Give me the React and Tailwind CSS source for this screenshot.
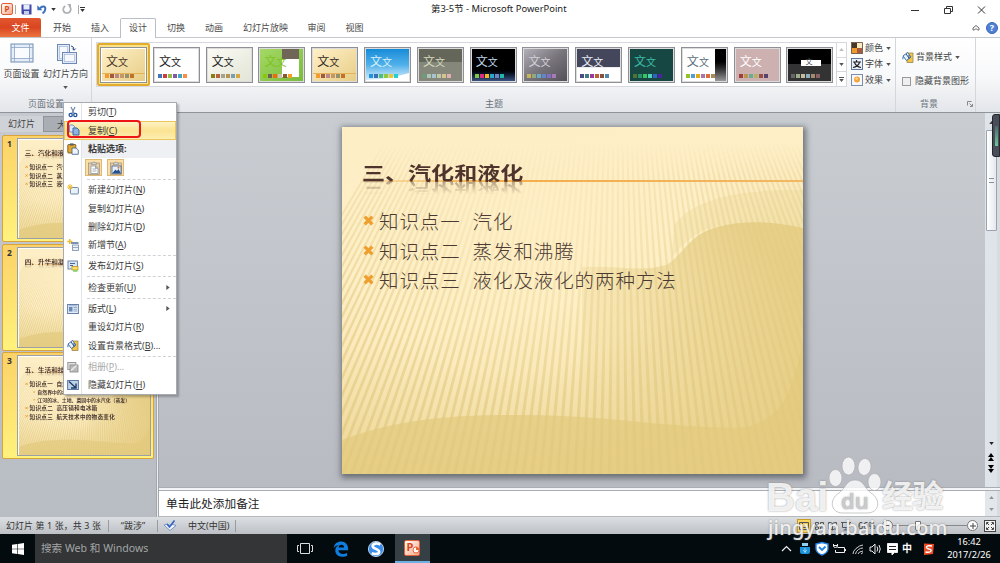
import React from "react";

const RAYS = Array.from({ length: 96 }, (_, i) => i - 50);

function SlideBackground({ id }) {
  return (
    <svg viewBox="0 0 461 347" preserveAspectRatio="none" className="absolute inset-0 h-full w-full">
      <defs>
        <linearGradient id={id + "base"} x1="0" y1="0" x2="0.25" y2="1">
          <stop offset="0" stopColor="#fdeec6" />
          <stop offset="0.6" stopColor="#feefc5" />
          <stop offset="1" stopColor="#f3e0a6" />
        </linearGradient>
        <radialGradient id={id + "glow"} gradientUnits="userSpaceOnUse" cx="170" cy="60" r="410">
          <stop offset="0.45" stopColor="#e3c97d" stopOpacity="0" />
          <stop offset="1" stopColor="#e3c97d" stopOpacity="0.7" />
        </radialGradient>
        <linearGradient id={id + "fade"} x1="0" y1="0" x2="0" y2="1">
          <stop offset="0.05" stopColor="#000" />
          <stop offset="0.14" stopColor="#888" />
          <stop offset="0.5" stopColor="#ddd" />
          <stop offset="1" stopColor="#fff" />
        </linearGradient>
        <linearGradient id={id + "top"} x1="0" y1="0" x2="0" y2="1">
          <stop offset="0.05" stopColor="#000" />
          <stop offset="0.4" stopColor="#fff" />
        </linearGradient>
        <radialGradient id={id + "mid"} gradientUnits="userSpaceOnUse" cx="190" cy="90" r="190">
          <stop offset="0" stopColor="#000" stopOpacity="0.85" />
          <stop offset="1" stopColor="#000" stopOpacity="0" />
        </radialGradient>
        <linearGradient id={id + "hill"} gradientUnits="userSpaceOnUse" x1="240" y1="300" x2="430" y2="130">
          <stop offset="0" stopColor="#e4cb80" stopOpacity="0" />
          <stop offset="0.45" stopColor="#e4cb80" stopOpacity="0.3" />
          <stop offset="1" stopColor="#e4cb80" stopOpacity="0.85" />
        </linearGradient>
        <mask id={id + "mask"}>
          <rect width="461" height="347" fill={`url(#${id}fade)`} />
          <rect width="461" height="347" fill={`url(#${id}mid)`} />
        </mask>
        <mask id={id + "topmask"}>
          <rect width="461" height="347" fill={`url(#${id}top)`} />
        </mask>
      </defs>
      <rect width="461" height="347" fill={`url(#${id}base)`} />
      <rect width="461" height="347" fill={`url(#${id}glow)`} mask={`url(#${id}topmask)`} />
      <g mask={`url(#${id}mask)`}>
        {RAYS.map((n) => (
          <polygon
            key={n}
            fill="#dfc57b"
            fillOpacity="0.58"
            points={`276,-377 ${276 + n * 8.6 - 1.7},347 ${276 + n * 8.6 + 1.7},347`}
          />
        ))}
      </g>
      <path d="M332 98C352 72 395 62 461 63V104C425 92 395 94 365 102C350 108 340 118 330 130Z" fill="#e9d38f" fillOpacity="0.3" />
      <path d="M240 140C270 138 305 146 326 137C340 128 348 108 372 101C400 93 430 94 461 101V347H240Z" fill={`url(#${id}hill)`} />
      <path d="M0 313C60 290 120 288 180 288C260 288 330 301 395 301C440 298 450 265 461 215V347H0Z" fill="#e2c97c" fillOpacity="0.68" />
    </svg>
  );
}

function Slide({ id, title, lines, bold }) {
  return (
    <div className="relative h-[347px] w-[461px] overflow-hidden bg-[#feefc6] font-['Noto_Sans_CJK_SC',sans-serif] text-[#4b3a33]">
      <SlideBackground id={id} />
      <div className="relative flex flex-col">
        <div className="absolute top-[53px] right-0 left-[20px] h-[2px] bg-linear-to-r from-[#f6b95a]/20 via-[#f4ad49] via-30% to-[#f3b763]" />
        <div className="mt-[32px] ml-[20px] h-[28px]">
          <div className="w-fit origin-left scale-x-[1.28] text-[18px] leading-[26px] font-bold whitespace-nowrap text-[#4e342c] [-webkit-box-reflect:below_-9px_linear-gradient(transparent_30%,rgba(0,0,0,0.6))]">
            {title}
          </div>
        </div>
        <div className="mt-[19px] flex flex-col">
          {lines.map(([head, tail, sub], i) => (
            <div key={i} className={sub ? "flex h-[27px] items-center pl-[49px]" : "flex h-[29.5px] items-center pl-[21px]"}>
              <svg viewBox="0 0 10 10" className={sub ? "h-[8px] w-[8px]" : "h-[11px] w-[11px]"}>
                <path d="M1.5 1.5L8.5 8.5M8.5 1.5L1.5 8.5" stroke="#ef9f2e" strokeWidth="3" />
              </svg>
              <div
                className={
                  (sub ? "ml-[7px] text-[17px] " : "ml-[5px] text-[19.5px] tracking-[0.9px] ") +
                  (bold ? "font-bold" : "font-light") +
                  " flex gap-[12px] leading-[29px] whitespace-nowrap"
                }
              >
                <span>{head}</span>
                {tail && <span>{tail}</span>}
              </div>
            </div>
          ))}
        </div>
      </div>
    </div>
  );
}

const SLIDES = [
  {
    title: "三、汽化和液化",
    lines: [
      ["知识点一", "汽化"],
      ["知识点二", "蒸发和沸腾"],
      ["知识点三", "液化及液化的两种方法"],
    ],
  },
  { title: "四、升华和凝华", lines: [] },
  {
    title: "五、生活和技术",
    lines: [
      ["知识点一", "自然界"],
      ["自然界中的水循环", "", true],
      ["江河的冰、土地、菜园中的水汽化（蒸发）", "", true],
      ["知识点二", "高压锅和电冰箱"],
      ["知识点三", "航天技术中的物态变化"],
    ],
  },
];

function Thumb({ n, slide }) {
  return (
    <div className="flex h-[107px] w-[152px] rounded-[2px] border border-[#d9a53a] bg-linear-to-b from-[#fbd268] to-[#fff27c] pt-[2px]">
      <div className="w-[14px] pt-[1px] pl-[4px] text-[8.5px] leading-[10px] font-bold text-[#333]">{n}</div>
      <div className="h-[101px] w-[134px] overflow-hidden border border-[#9b9fa8] bg-white p-px">
        <div className="origin-top-left scale-[0.287]">
          <Slide id={"t" + n} title={slide.title} lines={slide.lines} bold />
        </div>
      </div>
    </div>
  );
}

const THEMES = [
  { bg: "bg-linear-to-br from-[#fff0c8] to-[#e7cd85]", fg: "text-[#493728]", sw: ["#f29a2c", "#a5583f", "#b98a83", "#c39766", "#97906d", "#c07326"], line: true },
  { bg: "bg-white", fg: "text-[#222]", sw: ["#4475b4", "#c8403e", "#91bb4b", "#7f5aa5", "#3fa8c5", "#f79040"], light: true },
  { bg: "bg-linear-to-br from-[#fbfbf4] to-[#e3e5d7]", fg: "text-[#222]", sw: ["#8c7b16", "#b8613f", "#a5a38c", "#b59353", "#789eaf", "#d6a740"] },
  { bg: "bg-linear-to-br from-[#a5d865] to-[#79bc3c]", fg: "text-[#7fc323]", sw: ["#8bc80c", "#6b6453", "#f6670c", "#c9c3ac", "#86592e", "#f1a021"], deco: "green" },
  { bg: "bg-linear-to-br from-[#fff0c8] to-[#e7cd85]", fg: "text-[#332b25]", sw: ["#f29a2c", "#a5583f", "#b98a83", "#c39766", "#97906d", "#c07326"], line: true },
  { bg: "bg-linear-to-b from-[#128bd8] via-[#4fb1ea] to-[#dff2fb]", fg: "text-[#d9f1fb]", sw: ["#2192dd", "#3d6fb7", "#54bd74", "#8fc93e", "#ebc637", "#23cfd0"], deco: "wave" },
  { bg: "bg-linear-to-b from-[#64665a] from-40% to-[#84877a] to-42%", fg: "text-[#d6d8bd]", sw: ["#6f9b78", "#a8c7b9", "#a7c5cf", "#c3c9a4", "#d5c493", "#e3aeae"] },
  { bg: "bg-linear-to-b from-black from-60% to-[#3a5485]", fg: "text-[#bfd9ea]", sw: ["#7bc843", "#dd2b87", "#f5b420", "#24a9cd", "#6d83c4", "#1fb8a8"] },
  { bg: "bg-linear-to-br from-[#b2afb8] via-[#77747b] to-[#565158]", fg: "text-[#d3d1d9]", sw: ["#c9b559", "#94a880", "#67abc9", "#6784c7", "#816fc7", "#a57bb8"] },
  { bg: "bg-linear-to-b from-[#44465b] from-56% to-white to-58%", fg: "text-[#e9edf5]", sw: ["#4f4a87", "#3e7e83", "#99399d", "#bc6132", "#83513c", "#5086aa"] },
  { bg: "bg-[#174743]", fg: "text-[#3cbfa9]", sw: ["#4f7332", "#2f8e6b", "#33c85e", "#50d1ba", "#2b66c2", "#4b22a2"] },
  { bg: "bg-white", fg: "text-[#5b6e7d]", sw: ["#91c328", "#4f9fd0", "#dfac13", "#ae72ad", "#dc6e36", "#a98b5b"], deco: "dark" },
  { bg: "bg-[#cdb0b0]", fg: "text-white", sw: ["#a23d3d", "#b8964f", "#6eaa91", "#b6b06f", "#984e40", "#56426d"] },
  { bg: "bg-linear-to-b from-black from-45% to-[#333] to-47%", fg: "text-[#555]", sw: ["#666", "#9dad8f", "#c5bba1", "#8baec0", "#a6896f", "#8b6165"], deco: "label" },
];

function ThemeTile({ t, first }) {
  return (
    <div className={first ? "flex h-[43px] w-[53px] shrink-0 items-center justify-center rounded-[2px] border-2 border-[#e4ac2e] bg-[#fbe387]" : "flex h-[43px] w-[52.8px] shrink-0 items-center justify-center"}>
      <div className={`relative h-[36px] w-[47px] overflow-hidden border border-[#8d9094] p-px ${first ? "bg-white" : "bg-[#dcdcdc]"}`}>
        <div className={`relative flex h-full w-full flex-col overflow-hidden ${t.bg}`}>
          {t.deco === "green" && (
            <div className="absolute top-0 right-[4px] flex h-[28px] w-[17px] flex-col">
              <div className="h-[10px] bg-[#6f6657]" />
              <div className="flex-1 bg-white" />
            </div>
          )}
          {t.deco === "dark" && <div className="absolute inset-y-0 right-0 w-[11px] bg-linear-to-b from-black from-30% to-[#999]" />}
          {t.deco === "wave" && (
            <svg viewBox="0 0 43 32" preserveAspectRatio="none" className="absolute inset-0 h-full w-full">
              <path d="M0 31Q24 30 43 24V32H0Z" fill="#fff" />
            </svg>
          )}
          {t.line && <div className="absolute right-0 bottom-[7px] left-0 h-px bg-[#e5b25c]" />}
          {t.deco === "label" && <div className="absolute top-[11px] left-[13px] h-[6px] w-[20px] bg-white" />}
          <div className={`relative flex items-end pl-[4px] pt-[6px] text-[12px] leading-[14px] ${t.fg}`}>
            {t.deco === "label" ? (
              <span className="pl-[13px] text-[7px]">文</span>
            ) : (
              <>
                <span>文</span>
                <span className="text-[10px]">文</span>
              </>
            )}
          </div>
          <div className="relative mt-[5px] flex gap-px pl-[3px]">
            {t.sw.map((c, i) => (
              <i key={i} className="h-[4px] w-[4px]" style={{ background: c }} />
            ))}
          </div>
        </div>
      </div>
    </div>
  );
}

const Caret = ({ className = "" }) => (
  <svg viewBox="0 0 6 4" className={`h-[3px] w-[5px] ${className}`}>
    <path d="M0 0H6L3 4Z" fill="currentColor" />
  </svg>
);

const PptLogo = ({ className }) => (
  <div className={`flex items-center justify-center rounded-[2px] border border-[#e0603a] bg-linear-to-br from-white to-[#f5a684] font-bold text-[#d8491c] ${className}`}>P</div>
);

function BucketIcon({ className }) {
  return (
    <svg viewBox="0 0 12 12" className={className}>
      <rect x="5" y="2" width="6" height="9.5" fill="#f4c542" stroke="#8a7a52" strokeWidth=".7" />
      <path d="M1 5L5.5 1.5L9 6L4.5 9.5Z" fill="#e8f1fb" stroke="#365f96" strokeWidth=".9" />
      <path d="M4 3L7 7M7 4V8" stroke="#24508f" strokeWidth="1" fill="none" />
      <path d="M1 5Q-.2 7.5 .8 8.6Q1.8 8 1.4 5.5Z" fill="#3f74ba" />
    </svg>
  );
}

function MenuIcon({ kind }) {
  const common = { viewBox: "0 0 12 12", className: "h-[12px] w-[12px]" };
  switch (kind) {
    case "cut":
      return (
        <svg {...common}>
          <path d="M4 1L7.2 7.5M8 1L4.8 7.5" stroke="#6d88ae" strokeWidth="1.2" />
          <circle cx="3.7" cy="9" r="1.6" fill="none" stroke="#20539e" strokeWidth="1.3" />
          <circle cx="8.3" cy="9" r="1.6" fill="none" stroke="#20539e" strokeWidth="1.3" />
        </svg>
      );
    case "copy":
      return (
        <svg {...common}>
          <path d="M1.5 1H5L7 3V8H1.5Z" fill="#dbe8f8" stroke="#5d80b0" strokeWidth=".8" />
          <path d="M5 4H9L11 6V11H5Z" fill="#8db3e2" stroke="#315f9d" strokeWidth=".9" />
        </svg>
      );
    case "paste":
      return (
        <svg {...common}>
          <rect x=".8" y="1.5" width="8" height="8.5" rx=".7" fill="#e2a82e" stroke="#775a26" strokeWidth=".9" />
          <rect x="3" y=".4" width="3.6" height="2.2" fill="#59616b" />
          <path d="M5 5H9L11.3 7V11.3H5Z" fill="#eef4fb" stroke="#41618c" strokeWidth=".8" />
        </svg>
      );
    case "new":
      return (
        <svg {...common}>
          <rect x="3.4" y="3.5" width="8" height="6.5" rx=".8" fill="#e8f0fa" stroke="#7089ad" />
          <path d="M3 0V6M0 3H6M1 1L5 5M5 1L1 5" stroke="#f0bd31" strokeWidth="1" />
        </svg>
      );
    case "section":
      return (
        <svg {...common}>
          <path d="M2.8 0V5M.2 2.6H5.4" stroke="#f0bd31" strokeWidth="1.5" />
          <rect x="4" y="3" width="7.5" height="2" fill="#7b91b2" />
          <rect x="5.5" y="6" width="6" height="5.4" fill="#edf2f8" stroke="#8296b2" strokeWidth=".9" />
          <path d="M6 8.5H11" stroke="#8296b2" strokeWidth=".8" />
        </svg>
      );
    case "publish":
      return (
        <svg {...common}>
          <rect x="1" y="1" width="9.5" height="8" fill="#dce6f2" stroke="#6580a6" strokeWidth=".9" />
          <path d="M3 3.5H8M3 5.5H6" stroke="#44699a" />
          <rect x="5" y="6.5" width="6" height="3.5" fill="#ffe15c" stroke="#b48c24" strokeWidth=".7" />
          <path d="M6 11H10.5" stroke="#66c64e" strokeWidth="1.3" />
        </svg>
      );
    case "layout":
      return (
        <svg {...common}>
          <rect x=".6" y="1.5" width="10.8" height="9" fill="#e4edf8" stroke="#657fa8" />
          <rect x="2" y="4" width="3.5" height="4.5" fill="#6588b8" />
          <path d="M6.5 4.5H10M6.5 6.3H10M6.5 8H10M2 2.8H10" stroke="#7d97bd" strokeWidth=".8" />
        </svg>
      );
    case "bucket":
      return <BucketIcon className="h-[12px] w-[12px]" />;
    case "album":
      return (
        <svg {...common}>
          <rect x=".8" y="1.5" width="8" height="7" fill="#ddd" stroke="#999" />
          <rect x="3" y="4" width="8" height="7" fill="#bbb" stroke="#888" strokeWidth=".8" />
          <path d="M4 9.5L9.5 4.5" stroke="#eee" strokeWidth="1.2" />
        </svg>
      );
    case "hide":
      return (
        <svg {...common}>
          <rect x=".6" y="1.5" width="10.8" height="9" fill="#bed2e8" stroke="#5d7ba2" />
          <path d="M2 2.5L9 9M9 4.5V9H4" stroke="#1e3c67" strokeWidth="1.4" fill="none" />
        </svg>
      );
    default:
      return null;
  }
}

const MENU = [
  { icon: "cut", text: "剪切", key: "T" },
  { icon: "copy", text: "复制", key: "C", hot: true },
  { icon: "paste", text: "粘贴选项:", header: true },
  { paste: true },
  { sep: true },
  { icon: "new", text: "新建幻灯片", key: "N" },
  { text: "复制幻灯片", key: "A" },
  { text: "删除幻灯片", key: "D" },
  { icon: "section", text: "新增节", key: "A" },
  { sep: true },
  { icon: "publish", text: "发布幻灯片", key: "S" },
  { sep: true },
  { text: "检查更新", key: "U", more: true },
  { sep: true },
  { icon: "layout", text: "版式", key: "L", more: true },
  { text: "重设幻灯片", key: "R" },
  { icon: "bucket", text: "设置背景格式", key: "B", tail: "..." },
  { sep: true },
  { icon: "album", text: "相册", key: "P", tail: "...", off: true },
  { icon: "hide", text: "隐藏幻灯片", key: "H" },
];

function ContextMenu() {
  return (
    <div className="absolute top-[102px] left-[63px] flex h-[293px] w-[114px] flex-col border border-[#a7abb0] bg-white text-[9px] text-[#3b3b3b] shadow-[2px_2px_2px_rgba(0,0,0,0.25)]">
      {MENU.map((m, i) => {
        if (m.sep)
          return (
            <div key={i} className="flex h-[3px] shrink-0 items-center">
              <div className="h-full w-[18px] border-r border-[#e2e4e7]" />
              <div className="ml-[5px] flex-1 border-t border-dashed border-[#cfd2d6]" />
            </div>
          );
        if (m.paste)
          return (
            <div key={i} className="flex h-[20px] shrink-0 items-center">
              <div className="h-full w-[18px] border-r border-[#e2e4e7]" />
              <div className="ml-[3px] flex gap-[5px]">
                {[0, 1].map((k) => (
                  <div key={k} className="flex h-[17px] w-[17px] items-center justify-center border border-[#e0b876] bg-[#fbdfa9]">
                    <svg viewBox="0 0 14 14" className="h-[14px] w-[14px]">
                      <rect x="1.5" y="2" width="11" height="11.5" fill="#e7cfa2" stroke="#a39783" strokeWidth=".8" />
                      <path d="M4.5 3.5V2H6L7 .7L8 2H9.5V3.5Z" fill="#ddd" stroke="#888" strokeWidth=".6" />
                      {k === 0 ? (
                        <path d="M4 5H8.5L11 7.3V12.5H4Z M8.5 5V7.3H11 M5.5 8H9 M5.5 10H9.5" fill="#fff" stroke="#8190a5" strokeWidth=".7" />
                      ) : (
                        <>
                          <rect x="3" y="5" width="9" height="7.5" fill="#e8f0fa" stroke="#40608f" strokeWidth=".8" />
                          <path d="M3.5 12L6.5 8.5L8 10L9.5 8L11.7 12Z" fill="#244f8b" />
                          <circle cx="9.5" cy="6.8" r="1" fill="#e2762b" />
                        </>
                      )}
                    </svg>
                  </div>
                ))}
              </div>
            </div>
          );
        return (
          <div
            key={i}
            className={
              "flex h-[18.3px] shrink-0 items-center " +
              (m.hot ? "border border-[#ecc65a] bg-linear-to-b from-[#fdf2c3] via-[#fbe391] to-[#fdeeb0]" : "")
            }
          >
            <div className={"flex h-full w-[18px] items-center justify-center " + (m.hot ? "" : "border-r border-[#e2e4e7]")}>
              <MenuIcon kind={m.icon} />
            </div>
            <div
              className={
                "flex h-full flex-1 items-center whitespace-nowrap " +
                (m.header ? "bg-[#eef0f3] pl-[6px] font-bold" : m.hot ? "pl-[5px]" : "pl-[6px]") +
                (m.off ? " text-[#a9a9a9]" : "")
              }
            >
              <span>
                {m.text}
                {m.key && (
                  <>
                    (<u>{m.key}</u>){m.tail}
                  </>
                )}
              </span>
            </div>
            {m.more && (
              <svg viewBox="0 0 4 6" className="mr-[6px] h-[5px] w-[4px]">
                <path d="M0 0L4 3L0 6Z" fill="#555" />
              </svg>
            )}
          </div>
        );
      })}
    </div>
  );
}

function TitleBar() {
  return (
    <div className="flex h-[18px] shrink-0 items-center">
      <div className="flex w-[160px] items-center">
        <PptLogo className="ml-px h-[12px] w-[12px] text-[8px]" />
        <div className="ml-[2px] h-[9px] w-px bg-[#aaa]" />
        <svg viewBox="0 0 11 11" className="ml-[5px] h-[11px] w-[11px]">
          <path d="M.5 .5H10.5V10.5H1.5L.5 9.5Z" fill="#3f49a8" />
          <rect x="2.5" y=".5" width="6" height="5" fill="#e6ecfa" />
          <rect x="3" y="7" width="5" height="3.5" fill="#c9cde6" />
        </svg>
        <svg viewBox="0 0 10 10" className="ml-[5px] h-[10px] w-[10px]">
          <path d="M3 4.5C5 1.5 8.5 2 8.3 5C8.2 7 7 8.5 5.5 9.3" stroke="#3d6fc0" strokeWidth="2" fill="none" />
          <path d="M.3 1.2V6.3H5.4Z" fill="#3d6fc0" />
        </svg>
        <Caret className="ml-[4px] text-[#333]" />
        <svg viewBox="0 0 10 10" className="ml-[6px] h-[10px] w-[10px]">
          <path d="M3.2 2C-.2 4.5 1.2 9 5 9C9 9 10 4 7 2" stroke="#aeb2b7" strokeWidth="1.7" fill="none" />
          <path d="M5 0H9V4Z" fill="#aeb2b7" />
        </svg>
        <div className="ml-[6px] h-[9px] w-px bg-[#aaa]" />
        <div className="ml-px flex flex-col items-center gap-px text-[#333]">
          <div className="h-px w-[5px] bg-[#333]" />
          <Caret />
        </div>
      </div>
      <div className="flex-1 pl-[271px] text-[9.4px] tracking-[0.02px] whitespace-nowrap text-[#222]">第3-5节 - Microsoft PowerPoint</div>
      <svg viewBox="0 0 80 12" className="mr-[12px] h-[12px] w-[80px] translate-y-[1px]" fill="none" stroke="#333">
        <path d="M3 6.5H11M70 2.5L77 9.5M77 2.5L70 9.5" />
        <path d="M36.5 4.5H42.5V9.5H36.5ZM38.5 4V2.5H44.5V7.5H43" />
      </svg>
    </div>
  );
}

function RibbonTabs() {
  return (
    <div className="flex h-[20px] shrink-0 items-stretch border-b border-[#c4c8cd] text-[9px] leading-[19px] whitespace-nowrap text-[#4a4a4a]">
      <div className="w-[41px] rounded-tr-[2px] bg-linear-to-b from-[#e2572f] via-[#d94520] to-[#ec7340] text-center text-white">文件</div>
      <div className="ml-[12px] w-[19px]">开始</div>
      <div className="ml-[19px] w-[19px]">插入</div>
      <div className="ml-[10px] h-[20px] w-[36px] rounded-t-[2px] border border-b-0 border-[#b9bfc7] bg-white text-center leading-[18px]">设计</div>
      <div className="ml-[11px] w-[38px]">切换</div>
      <div className="w-[38px]">动画</div>
      <div className="w-[64.5px]">幻灯片放映</div>
      <div className="w-[38px]">审阅</div>
      <div className="flex-1">视图</div>
      <div className="flex items-center gap-[6px] pr-[2px]">
        <svg viewBox="0 0 8 8" className="h-[8px] w-[8px]" fill="none" stroke="#666">
          <path d="M1 4L4 1.5L7 4V6H5.5L4 4.5L2.5 6H1Z" />
        </svg>
        <div className="flex h-[12px] w-[12px] items-center justify-center rounded-full border border-[#3b66ba] bg-[#4f80d6] text-[9px] leading-[10px] font-bold text-white">?</div>
      </div>
    </div>
  );
}

function Ribbon() {
  return (
    <div className="flex h-[75px] shrink-0 border-b border-[#8f949b] bg-linear-to-b from-white via-[#f8f9fa] to-[#e3e6ea] text-[9px] leading-[12px] whitespace-nowrap text-[#444]">
      <div className="flex w-[92px] flex-col border-r border-[#d3d6da]">
        <div className="flex h-[60px] pt-[5px]">
          <div className="flex w-[43px] flex-col items-center">
            <svg viewBox="0 0 24 20" className="h-[20px] w-[24px]">
              <rect x="1" y="1" width="22" height="18" fill="#e4edf8" stroke="#738db4" />
              <path d="M4.5 1V19M19.5 1V19M1 4.5H23M1 15.5H23" stroke="#8ea5c7" strokeWidth=".8" />
              <rect x="5" y="5" width="14" height="10" fill="#f9fbfe" />
            </svg>
            <div className="mt-[5px]">页面设置</div>
          </div>
          <div className="flex w-[45px] flex-col items-center">
            <svg viewBox="0 0 24 22" className="h-[22px] w-[24px]">
              <rect x="3.5" y="1.5" width="12" height="16" fill="#e1eaf6" stroke="#6e89b2" />
              <rect x="5.5" y="3.5" width="8" height="12" fill="#f5f8fc" stroke="#a6b8d2" strokeWidth=".7" />
              <rect x="8.5" y="9.5" width="14" height="11" fill="#e1eaf6" stroke="#6e89b2" />
              <rect x="10.5" y="11.5" width="10" height="7" fill="#f5f8fc" stroke="#a6b8d2" strokeWidth=".7" />
              <path d="M17 3Q20 3 20 7M18.3 5.5L20 7.3L21.7 5.5" fill="none" stroke="#2e4c78" />
            </svg>
            <div className="mt-[3px]">幻灯片方向</div>
            <Caret className="mt-[6px] text-[#555]" />
          </div>
        </div>
        <div className="pl-[28px] text-[#6b727b]">页面设置</div>
      </div>
      <div className="flex w-[758px] flex-col pt-[4px] pl-[4px]">
        <div className="flex h-[45px] w-[751px] border border-[#d5d8dc] bg-white">
          <div className="flex flex-1 overflow-hidden">
            {THEMES.map((t, i) => (
              <ThemeTile key={i} t={t} first={i === 0} />
            ))}
          </div>
          <div className="flex w-[10px] flex-col border-l border-[#d5d8dc] text-[#555]">
            <div className="flex flex-1 items-center justify-center text-[#bbb]">
              <Caret className="rotate-180" />
            </div>
            <div className="flex flex-1 items-center justify-center border-y border-[#d5d8dc]">
              <Caret />
            </div>
            <div className="flex flex-1 flex-col items-center justify-center gap-px">
              <div className="h-px w-[5px] bg-[#555]" />
              <Caret />
            </div>
          </div>
        </div>
        <div className="mt-[11px] pl-[42px] text-center text-[#6b727b]">主题</div>
      </div>
      <div className="flex w-[46px] flex-col gap-[4px] border-r border-[#d3d6da] pt-[4px] pl-[1px]">
        {["颜色", "字体", "效果"].map((t, i) => (
          <div key={t} className="flex h-[12px] items-center">
            <svg viewBox="0 0 12 12" className="h-[12px] w-[12px]">
              {i === 0 && (
                <>
                  <path d="M0 0H6V6H0Z" fill="#4b3728" />
                  <path d="M6 0H12V6H6Z" fill="#fdebc0" />
                  <path d="M0 6H6V12H0Z" fill="#f09b27" />
                  <path d="M6 6H12V12H6Z" fill="#a55a41" />
                  <path d="M.5 .5H11.5V11.5H.5Z" fill="none" stroke="#776655" />
                </>
              )}
              {i === 1 && (
                <>
                  <rect x=".5" y=".5" width="11" height="11" fill="#e9f0f8" stroke="#5e7699" />
                  <path d="M2 4H10M5.5 2V4M3.5 4.5Q5 8.5 10 9.5M8.5 4.5Q7 8.5 2 9.5" stroke="#222" strokeWidth="1.2" fill="none" />
                </>
              )}
              {i === 2 && (
                <>
                  <rect x=".5" y=".5" width="11" height="11" fill="#f4f7fb" stroke="#7b8ea9" />
                  <circle cx="6" cy="5.5" r="3" fill="#f5a43a" />
                  <circle cx="5.5" cy="4.8" r="1.2" fill="#fcd590" />
                </>
              )}
            </svg>
            <span className="ml-[2px]">{t}</span>
            <Caret className="ml-[3px] text-[#555]" />
          </div>
        ))}
      </div>
      <div className="flex w-[80px] flex-col border-r border-[#d3d6da]">
        <div className="mt-[13px] ml-[6px] flex h-[12px] items-center">
          <BucketIcon className="h-[12px] w-[12px]" />
          <span className="ml-[2px]">背景样式</span>
          <Caret className="ml-[3px] text-[#555]" />
        </div>
        <div className="mt-[12px] ml-[6px] flex h-[12px] items-center">
          <div className="h-[9px] w-[9px] border border-[#999] bg-[#eee]" />
          <span className="ml-[4px]">隐藏背景图形</span>
        </div>
        <div className="mt-[11px] flex items-center pl-[24px] text-[#6b727b]">
          背景
          <svg viewBox="0 0 6 6" className="ml-[29px] h-[6px] w-[6px]" fill="none" stroke="#888">
            <path d="M.5 4.5V.5H4.5M2.5 2.5L5 5M5.5 3V5.5H3" />
          </svg>
        </div>
      </div>
    </div>
  );
}

function Workspace() {
  return (
    <div className="flex min-h-0 flex-1 bg-[#bbbfc6]">
      <div className="flex w-[156px] flex-col bg-linear-to-b from-[#c6cad0] to-[#b8bcc3]">
        <div className="mt-[3px] flex h-[16px] text-[9px] leading-[15px] text-[#444]">
          <div className="w-[43px] bg-[#cfd2d7] pl-[8px]">幻灯片</div>
          <div className="flex-1 border border-[#8f949c] bg-[#a9adb4] pl-[13px]">大纲</div>
        </div>
        <div className="mt-[3px] ml-[2px] flex flex-col gap-[1.5px]">
          {SLIDES.map((s, i) => (
            <Thumb key={i} n={i + 1} slide={s} />
          ))}
        </div>
      </div>
      <div className="w-[3px] border-x border-[#a4a8ae] bg-[#eceef0]" />
      <div className="flex flex-1 flex-col">
        <div className="flex h-[374px]">
          <div className="flex-1 bg-linear-to-b from-[#c9cdd2] to-[#b8bbc1] pt-[14px] pl-[183px]">
            <div className="h-[347px] w-[461px] shadow-[1px_2px_6px_2px_rgba(70,75,82,0.7)]">
              <Slide id="main" {...SLIDES[0]} />
            </div>
          </div>
          <div className="flex w-[12px] flex-col items-center bg-[#dfe3ea] text-[#444]">
            <Caret className="mt-[8px] rotate-180" />
            <div className="mt-[6px] flex h-[101px] w-[11px] items-center justify-center rounded-[1px] border border-[#9ba3b0] bg-linear-to-r from-white to-[#e4e7ed]">
              <div className="h-[5px] w-[5px] border-y border-[#8a8f98]" />
            </div>
            <Caret className="mt-[211px] text-[#222]" />
            <div className="mt-[8px] flex flex-col text-black">
              <Caret className="h-[4px] w-[6px] rotate-180" />
              <Caret className="h-[4px] w-[6px] rotate-180" />
            </div>
            <div className="mt-[4px] flex flex-col text-black">
              <Caret className="h-[4px] w-[6px]" />
              <Caret className="h-[4px] w-[6px]" />
            </div>
          </div>
          <div className="w-[3px] bg-[#d8dbe0]" />
        </div>
        <div className="h-[4px] border-y border-[#aaadb3] bg-[#f3f4f6]" />
        <div className="flex flex-1 border-b border-[#b5b8bd] bg-white">
          <div className="flex-1 pl-[7px] text-[11.7px] leading-[24px] text-[#222]">单击此处添加备注</div>
          <div className="flex w-[12px] flex-col items-center justify-between bg-[#e3e6eb] py-[5px] text-[#8c9496]">
            <Caret className="rotate-180" />
            <Caret />
          </div>
          <div className="w-[3px] bg-[#d8dbe0]" />
        </div>
      </div>
    </div>
  );
}

const Divider = () => <div className="h-[12px] w-px bg-[#989ca2]" />;

function StatusBar() {
  return (
    <div className="flex h-[17px] shrink-0 items-center bg-linear-to-b from-[#dcdfe2] to-[#bdc1c6] text-[9px] leading-[16px] whitespace-nowrap text-[#333]">
      <div className="w-[108px] pl-[6px] text-[8.9px] tracking-[0.15px]">幻灯片 第 1 张，共 3 张</div>
      <Divider />
      <div className="w-[48px] text-center">“跋涉”</div>
      <Divider />
      <svg viewBox="0 0 12 11" className="ml-[6px] h-[11px] w-[12px]">
        <path d="M0 5Q3 3 6 5.5Q9 3.5 12 5.5L6 10.5Z" fill="#f2f6fc" stroke="#5e7fb8" strokeWidth=".8" />
        <path d="M3 4L5.5 7L10.5 .5" stroke="#3564c4" strokeWidth="1.6" fill="none" />
      </svg>
      <div className="w-[59px] pl-[12px]">中文(中国)</div>
      <Divider />
      <div className="flex-1" />
      <div className="flex h-[14px] w-[14px] items-center justify-center border border-[#c99b2a] bg-[#fbd65e]">
        <svg viewBox="0 0 10 8" className="h-[8px] w-[10px]" fill="none" stroke="#555">
          <path d="M.5 .5H9.5V7.5H.5ZM3.5 .5V7.5M3.5 5.5H9" />
        </svg>
      </div>
      <svg viewBox="0 0 40 10" className="ml-[3px] h-[10px] w-[40px]" fill="none" stroke="#555">
        <path d="M1.5 1.5H4.5V4H1.5ZM6.5 1.5H9.5V4H6.5ZM1.5 6H4.5V8.5H1.5ZM6.5 6H9.5V8.5H6.5ZM14.5 1.5Q17 1 18.5 2.5Q20 1 22.5 1.5V8Q20 7.5 18.5 9Q17 7.5 14.5 8ZM18.5 2.5V9M27 1.5H37M28.5 2V6.5H35.5V2M32 7V9M29.5 9H34.5" />
      </svg>
      <div className="ml-[4px] w-[24px] text-[9px]">66%</div>
      <div className="flex h-[11px] w-[11px] items-center justify-center rounded-full border border-[#777] bg-white">
        <div className="h-[1.5px] w-[5px] bg-[#555]" />
      </div>
      <div className="flex h-[12px] w-[74px] items-center">
        <div className="h-px w-[22px] bg-[#888]" />
        <div className="h-[10px] w-[6px] rounded-b-[2px] border border-[#777] bg-white" />
        <div className="h-px flex-1 bg-[#888]" />
      </div>
      <div className="flex h-[11px] w-[11px] items-center justify-center rounded-full border border-[#777] bg-white">
        <svg viewBox="0 0 6 6" className="h-[6px] w-[6px]" stroke="#444">
          <path d="M3 0V6M0 3H6" />
        </svg>
      </div>
      <svg viewBox="0 0 12 12" className="mr-[4px] ml-[6px] h-[12px] w-[12px]" fill="none" stroke="#444">
        <rect x=".5" y=".5" width="11" height="11" fill="#f2f2f2" />
        <path d="M3 3L5 5M9 3L7 5M3 9L5 7M9 9L7 7M2.5 4.5V2.5H4.5M7.5 2.5H9.5V4.5M2.5 7.5V9.5H4.5M7.5 9.5H9.5V7.5" />
      </svg>
    </div>
  );
}

function Taskbar() {
  return (
    <div className="flex h-[29px] shrink-0 items-stretch bg-[#040b0e] text-white">
      <div className="flex w-[35px] items-center justify-center">
        <svg viewBox="0 0 12 12" className="h-[12px] w-[12px]" fill="#fff">
          <path d="M0 1.7L5.2 1V5.7H0ZM5.8 .9L12 0V5.7H5.8ZM0 6.3H5.2V11L0 10.3ZM5.8 6.3H12V12L5.8 11.1Z" />
        </svg>
      </div>
      <div className="w-[252px] bg-[#333536] pl-[6px] text-[10.6px] leading-[29px] text-[#a3a5a6]">搜索 Web 和 Windows</div>
      <div className="flex w-[35px] items-center justify-center">
        <svg viewBox="0 0 16 11" className="h-[11px] w-[16px]" fill="none" stroke="#ddd">
          <path d="M3.5 .5H12.5V10.5H3.5ZM2 2.5H.5V8.5H2M14 2.5H15.5V8.5H14" />
        </svg>
      </div>
      <div className="flex w-[38px] items-center justify-center">
        <svg viewBox="0 0 24 24" className="h-[16px] w-[16px]" fill="#0e7ddd">
          <path d="M1 10.5C2 4 6.5 .8 12 .8C19 .8 22.6 6 22.6 11V14H8.2C8.4 18 11.5 19.4 14.6 19.4C17.3 19.4 19.4 18.6 21.2 17.5V22C19.2 23 16.8 23.5 13.8 23.5C7.5 23.5 3.4 20 3.4 14.3C3.4 10.6 5.5 8 8.6 6.5C5.5 6.8 2.8 8.2 1 10.5ZM8.4 9.8H16.6C16.6 7.3 15.3 5.8 12.7 5.8C10.3 5.8 8.8 7.5 8.4 9.8Z" />
        </svg>
      </div>
      <div className="flex w-[35px] items-center justify-center pr-[3px]">
        <svg viewBox="0 0 16 16" className="h-[16px] w-[16px]">
          <circle cx="8" cy="8" r="7.6" fill="#3b8ee8" stroke="#dcebfa" strokeWidth=".8" />
          <path d="M12.300 3.600C9.500 1.800 4.800 2.300 4.600 5C4.500 7.800 11.500 8 11.200 11C11 13 7 13.600 3.700 12.300" fill="none" stroke="#fff" strokeWidth="2.600" />
        </svg>
      </div>
      <div className="flex w-[35px] items-center justify-center border-b-2 border-[#6fb0e3] bg-[#364044]">
        <div className="relative mr-[2px] h-[16px] w-[16px]">
          <PptLogo className="h-[16px] w-[16px] pr-[3px] text-[11px]" />
          <svg viewBox="0 0 8 8" className="absolute right-0 bottom-[2px] h-[8px] w-[8px]">
            <circle cx="4" cy="4" r="3" fill="#fff" stroke="#e8683d" />
            <path d="M4 4V1A3 3 0 0 1 7 4Z" fill="#e8683d" />
          </svg>
        </div>
      </div>
      <div className="flex-1" />
      <svg viewBox="0 0 160 16" className="mt-[7px] h-[16px] w-[160px]" fill="none" stroke="#eee">
        <path d="M4 10L8.500 5.500L13 10" strokeWidth="1.2" />
        <path d="M22 6H32V11Q32 13 30 13H24Q22 13 22 11Z" fill="#1b92da" stroke="none" />
        <path d="M24 2H30V5H24Z" fill="#8bd1f5" stroke="none" />
        <path d="M27 7V12M25 9L27 11L29 9" stroke="#b8e5fb" strokeWidth=".8" />
        <path d="M44 1.500L50 3V8Q49.500 12 44 14Q38.500 12 38 8V3Z" fill="#fff" stroke="#2582e8" strokeWidth="1.400" />
        <path d="M41 6L44 9L47.500 5.500" stroke="#2582e8" strokeWidth="1.800" />
        <path d="M59.500 6.500H66.500V11.500H57.500V9M67.500 8V10M55.500 3V5Q55.500 6.500 57.500 6.500Q59.500 6.500 59.500 4.500V3M55 4.500H60" />
        <path d="M75 13Q75 10 78 7.500Q82 4 85 4M77.500 13Q78 10 80.500 8.500Q82.500 7 85 7M80 13Q80.500 10.500 85 10M83 13L85 11.500" stroke="#ccc" />
        <path d="M92 6H94L97 3V13L94 10H92ZM99 5.500Q100.500 8 99 10.500M101 4Q103.500 8 101 12" />
        <path d="M109.500 2.500H119.500V11.500H116.500L114 14V11.500H109.500Z" fill="#fff" />
        <path d="M111 5.500H118M111 8.500H118" stroke="#222" />
        <path d="M146 2.500L156 3L155 13L146 14Z" fill="#ef4b24" stroke="none" />
        <path d="M154 5Q148 4 148.500 6.500Q149 7.500 151 8Q153.500 8.500 153 10Q152 12 147.500 11" stroke="#fff" strokeWidth="1.500" />
      </svg>
      <div className="-ml-[36px] mr-[26px] w-[10px] text-[10px] leading-[28px] font-bold">中</div>
      <div className="w-[62px] pt-[2px] text-center text-[9.2px] leading-[12.5px]">
        <div>16:42</div>
        <div>2017/2/26</div>
      </div>
    </div>
  );
}

function Watermark() {
  return (
    <div className="absolute top-[455px] left-[766px] flex h-[90px] w-[182px] flex-col text-white/85 [text-shadow:0_0_2px_rgba(110,110,110,0.75)]">
      <div className="flex h-[60px] items-end font-['Liberation_Sans','Noto_Sans_CJK_SC',sans-serif] font-bold whitespace-nowrap">
        <div className="w-[62px] text-[40px] leading-[36px]">Bai</div>
        <div className="relative h-[60px] w-[54px]">
          <svg viewBox="0 0 54 60" className="h-[60px] w-[54px]" fill="#fff" fillOpacity=".78" stroke="#a9aaab" strokeOpacity=".8" strokeWidth=".8">
            <ellipse cx="7.500" cy="23" rx="6.500" ry="8.500" />
            <ellipse cx="20.500" cy="11" rx="6.500" ry="9" />
            <ellipse cx="36.500" cy="12" rx="6.500" ry="8.500" transform="rotate(8 36.500 12)" />
            <ellipse cx="46.500" cy="27" rx="6.500" ry="8.500" />
            <path d="M27 25C36 25 36 33 43 38C53 44 52 58 39 58H15C2 58 1 44 11 38C18 33 18 25 27 25Z" />
          </svg>
          <div className="absolute top-[33px] left-[13px] font-['Open_Sans',sans-serif] text-[22px] leading-[24px] font-semibold text-[#c9cbcd]">du</div>
        </div>
        <div className="text-[31px] leading-[36px] tracking-[-0.5px]">经验</div>
      </div>
      <div className="pl-[2px] text-[20px] leading-[26px] font-medium tracking-[0.2px] whitespace-nowrap">jingyan.baidu.com</div>
    </div>
  );
}

export default function App() {
  return (
    <div className="relative flex h-[563px] w-[1000px] flex-col overflow-hidden bg-white font-['Noto_Sans','Noto_Sans_CJK_SC',sans-serif]">
      <TitleBar />
      <RibbonTabs />
      <Ribbon />
      <Workspace />
      <StatusBar />
      <Taskbar />
      <div className="absolute top-[114px] right-0 flex h-[43px] w-[8px] flex-col items-center justify-center rounded-l-[3px] border border-[#24272d] bg-[#484d59]">
        <div className="h-[20px] w-[3px] bg-linear-to-b from-[#4c6a68] to-[#6bc79b]" />
      </div>
      <ContextMenu />
      <div className="absolute top-[120px] left-[67px] h-[18px] w-[74px] rounded-[4px] border-2 border-[#ed1515]" />
      <Watermark />
    </div>
  );
}
